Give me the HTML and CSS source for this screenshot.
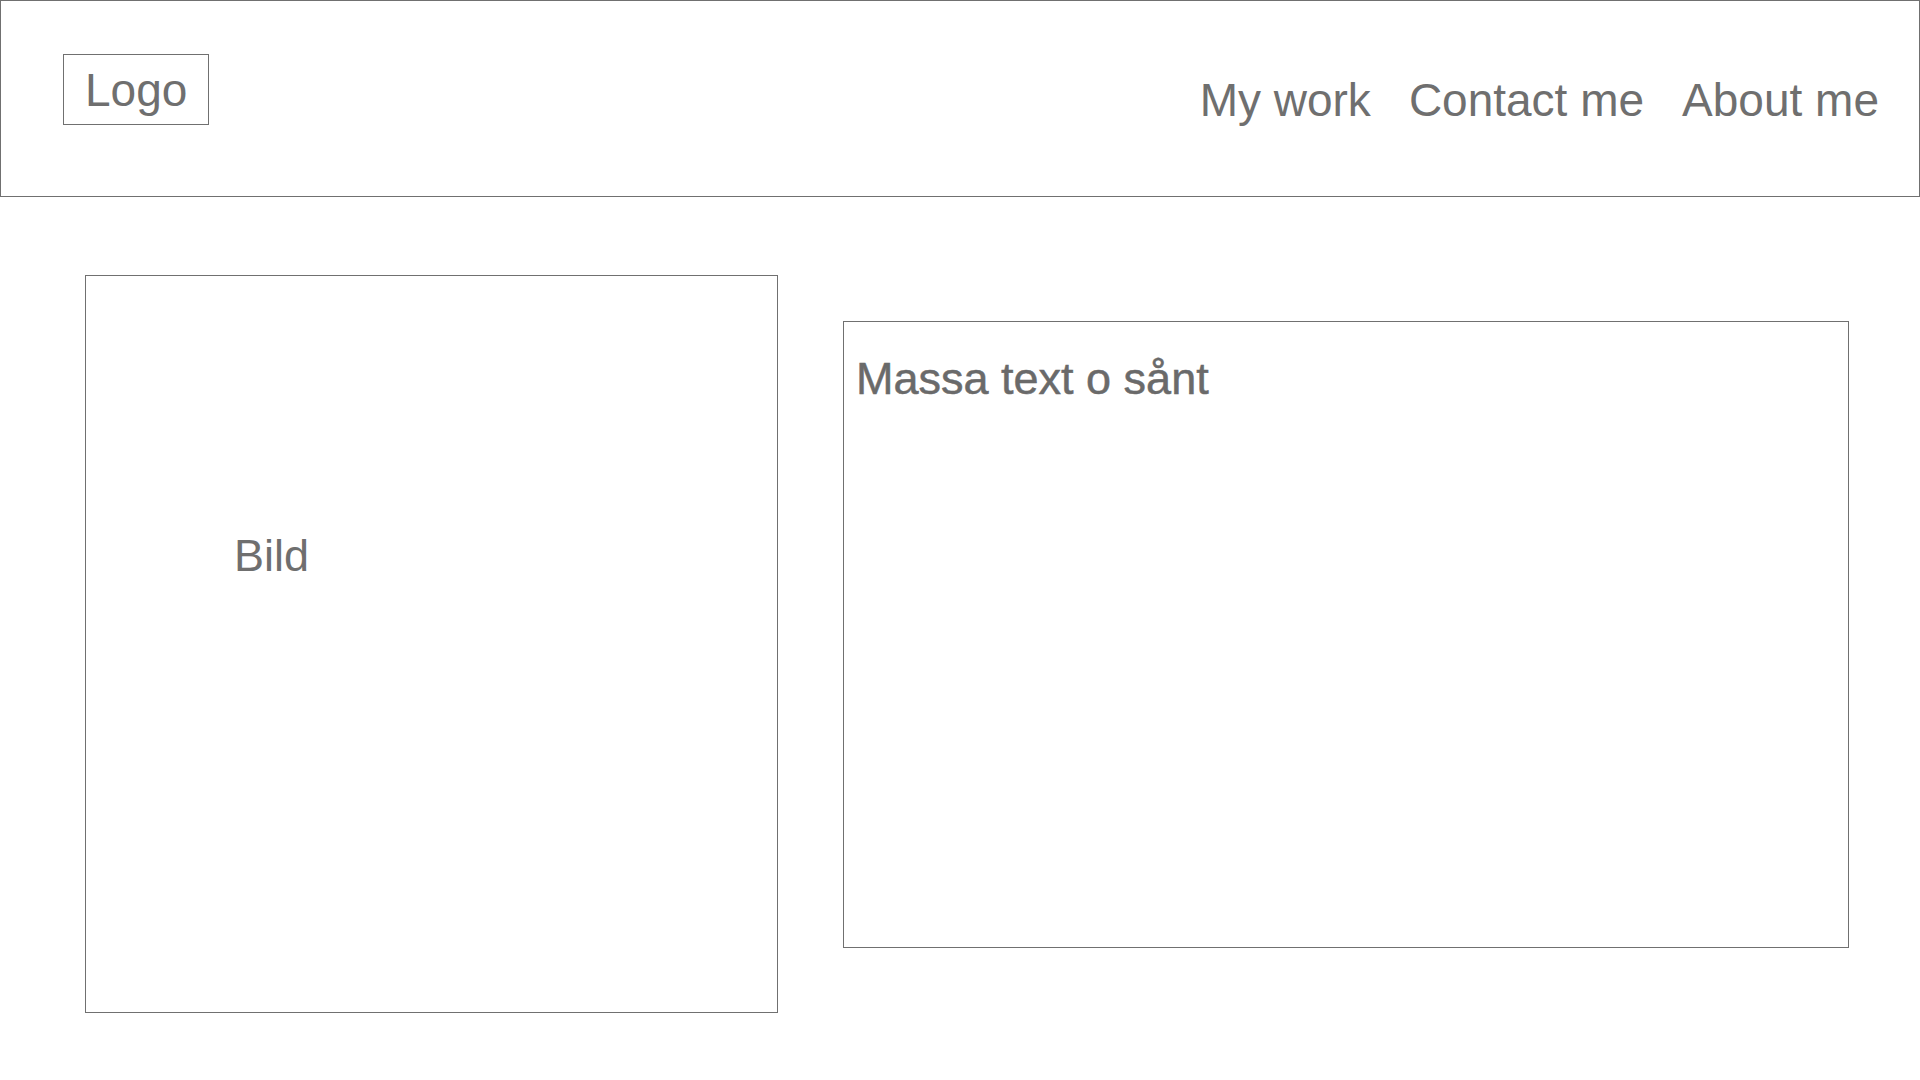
FILE: index.html
```html
<!DOCTYPE html>
<html lang="sv">
<head>
<meta charset="utf-8">
<title>Portfolio</title>
<link rel="stylesheet" href="styles.css">
</head>
<body>
<header class="site-header">
  <div class="logo">Logo</div>
  <nav class="nav">
    <a class="nav-link" href="#">My work</a>
    <a class="nav-link" href="#">Contact me</a>
    <a class="nav-link" href="#">About me</a>
  </nav>
</header>
<main class="main">
  <div class="image-box"><span class="image-label">Bild</span></div>
  <div class="text-box"><p class="text-content">Massa text o sånt</p></div>
</main>
</body>
</html>
```

FILE: styles.css
```css
* { box-sizing: border-box; }
html, body { margin: 0; padding: 0; background: #ffffff; }
body {
  font-family: "Liberation Sans", Arial, sans-serif;
  color: #6f6f6f;
  width: 1920px;
  height: 1080px;
  overflow: hidden;
}
.site-header {
  width: 1920px;
  height: 197px;
  border: 1px solid #707070;
  display: flex;
  justify-content: space-between;
  align-items: flex-start;
  padding: 53px 40px 0 62px;
}
.logo {
  border: 1px solid #707070;
  font-size: 46px;
  line-height: 67px;
  height: 71px;
  padding: 2px 21px 0 21px;
}
.nav {
  display: flex;
  gap: 38px;
  margin-top: 23px;
}
.nav-link {
  font-size: 46px;
  line-height: 46px;
  color: #6f6f6f;
  text-decoration: none;
}
.main {
  display: flex;
  align-items: flex-start;
  gap: 65px;
  padding: 78px 0 0 85px;
}
.image-box {
  width: 693px;
  height: 738px;
  border: 1px solid #707070;
  padding: 257px 0 0 148px;
}
.image-label {
  font-size: 45px;
  line-height: 45px;
  display: block;
}
.text-box {
  width: 1006px;
  height: 627px;
  margin-top: 46px;
  border: 1px solid #707070;
  padding: 34px 0 0 12px;
}
.text-content {
  margin: 0;
  font-size: 45px;
  line-height: 45px;
  color: #6a6a6a;
  -webkit-text-stroke: 0.5px #6a6a6a;
}
```
